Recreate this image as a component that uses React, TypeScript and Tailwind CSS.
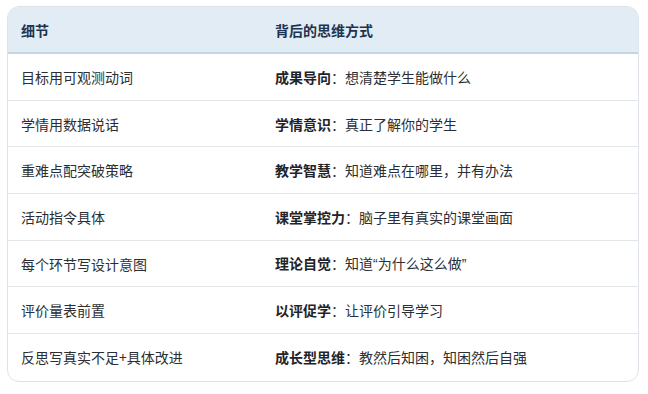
const rows: [string, string, React.ReactNode][] = [
  ["目标用可观测动词", "成果导向", "想清楚学生能做什么"],
  ["学情用数据说话", "学情意识", "真正了解你的学生"],
  ["重难点配突破策略", "教学智慧", "知道难点在哪里，并有办法"],
  ["活动指令具体", "课堂掌控力", "脑子里有真实的课堂画面"],
  [
    "每个环节写设计意图",
    "理论自觉",
    <>
      知道<span className="font-['Liberation_Sans']">“</span>为什么这么做
      <span className="font-['Liberation_Sans']">”</span>
    </>,
  ],
  ["评价量表前置", "以评促学", "让评价引导学习"],
  ["反思写真实不足+具体改进", "成长型思维", "教然后知困，知困然后自强"],
];

function App() {
  return (
    <div
      className="w-[648px] h-[394px] bg-white pt-[6px] pl-[7px]"
      style={{ fontFamily: '"Noto Sans CJK SC", "Noto Sans", sans-serif' }}
    >
      <div className="w-[632px] rounded-[12px] border border-[#dde3e8] overflow-hidden text-[14px] leading-[20px]">
        <div className="flex h-[47px] items-center bg-[#e2ecf5] border-b-2 border-[#c4d4e2] font-bold text-[#1d3450]">
          <div className="w-[254px] pl-[13px]">细节</div>
          <div className="pl-[13px]">背后的思维方式</div>
        </div>
        {rows.map(([a, b, c], i) => (
          <div
            key={i}
            className={
              "flex h-[46.7px] items-center text-[#2b2f33] " +
              (i < rows.length - 1 ? "border-b border-[#e2e6ea]" : "")
            }
          >
            <div className="w-[254px] pl-[13px]">{a}</div>
            <div className="pl-[13px]">
              <span className="font-bold text-[#1f2429]">{b}</span>：{c}
            </div>
          </div>
        ))}
      </div>
    </div>
  );
}

export default App;
